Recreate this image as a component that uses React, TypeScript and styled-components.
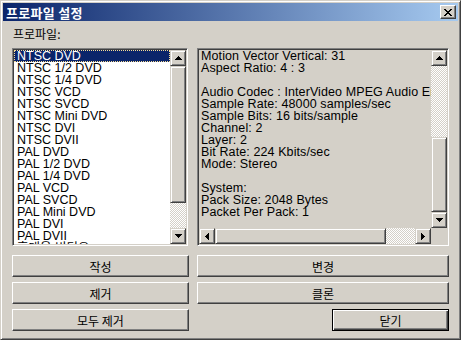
import React from "react";
import styled, { createGlobalStyle, css } from "styled-components";

const GlobalStyle = createGlobalStyle`
  html, body {
    margin: 0;
    padding: 0;
    background: #d4d0c8;
  }
`;

const profiles = [
  "NTSC DVD",
  "NTSC 1/2 DVD",
  "NTSC 1/4 DVD",
  "NTSC VCD",
  "NTSC SVCD",
  "NTSC Mini DVD",
  "NTSC DVI",
  "NTSC DVII",
  "PAL DVD",
  "PAL 1/2 DVD",
  "PAL 1/4 DVD",
  "PAL VCD",
  "PAL SVCD",
  "PAL Mini DVD",
  "PAL DVI",
  "PAL DVII",
  "휴대용 비디오",
];

const details = [
  "Motion Vector Vertical: 31",
  "Aspect Ratio: 4 : 3",
  "",
  "Audio Codec : InterVideo MPEG Audio Encoder",
  "Sample Rate: 48000 samples/sec",
  "Sample Bits: 16 bits/sample",
  "Channel: 2",
  "Layer: 2",
  "Bit Rate: 224 Kbits/sec",
  "Mode: Stereo",
  "",
  "System:",
  "Pack Size: 2048 Bytes",
  "Packet Per Pack: 1",
];

const raised = css`
  box-sizing: border-box;
  background: #d4d0c8;
  border: 1px solid;
  border-color: #d4d0c8 #404040 #404040 #d4d0c8;
  box-shadow: inset 1px 1px #fff, inset -1px -1px #808080;
`;

const Arrow: React.FC<{ dir: "up" | "down" | "left" | "right" }> = ({ dir }) => {
  const points = {
    up: "3.5,0 7,4 0,4",
    down: "0,0 7,0 3.5,4",
    left: "4,0 4,7 0,3.5",
    right: "0,0 4,3.5 0,7",
  }[dir];
  const vertical = dir === "up" || dir === "down";
  return (
    <svg
      width={vertical ? 7 : 4}
      height={vertical ? 4 : 7}
      viewBox={vertical ? "0 0 7 4" : "0 0 4 7"}
      shapeRendering="crispEdges"
    >
      <polygon points={points} fill="#000" />
    </svg>
  );
};

const CloseGlyph = () => (
  <svg width="8" height="7" viewBox="0 0 8 7" shapeRendering="crispEdges">
    <path
      d="M0 0h2v1H0zM6 0h2v1H6zM1 1h2v1H1zM5 1h2v1H5zM2 2h4v1H2zM3 3h2v1H3zM2 4h4v1H2zM1 5h2v1H1zM5 5h2v1H5zM0 6h2v1H0zM6 6h2v1H6z"
      fill="#000"
    />
  </svg>
);

const App: React.FC = () => {
  return (
    <>
      <GlobalStyle />
      <Window>
        <TitleBar>
          <TitleText>프로파일 설정</TitleText>
          <CloseButton>
            <CloseGlyph />
          </CloseButton>
        </TitleBar>
        <Body>
          <Label>프로파일:</Label>
          <Panels>
            <Sunken>
              <ListArea>
                {profiles.map((name, i) => (
                  <ListRow key={name} $selected={i === 0}>
                    {name}
                  </ListRow>
                ))}
              </ListArea>
              <VScroll>
                <ScrollButton>
                  <Arrow dir="up" />
                </ScrollButton>
                <Thumb $size={137} />
                <Track />
                <ScrollButton>
                  <Arrow dir="down" />
                </ScrollButton>
              </VScroll>
            </Sunken>
            <Sunken $readonly>
              <DetailGrid>
                <DetailText>
                  {details.map((line, i) => (
                    <DetailLine key={i}>{line || "\u00a0"}</DetailLine>
                  ))}
                </DetailText>
                <VScroll>
                  <ScrollButton>
                    <Arrow dir="up" />
                  </ScrollButton>
                  <Track />
                  <Thumb $size={75} />
                  <ScrollButton>
                    <Arrow dir="down" />
                  </ScrollButton>
                </VScroll>
                <HScroll>
                  <ScrollButton>
                    <Arrow dir="left" />
                  </ScrollButton>
                  <Thumb $size={171} $horizontal />
                  <Track />
                  <ScrollButton>
                    <Arrow dir="right" />
                  </ScrollButton>
                </HScroll>
                <Corner />
              </DetailGrid>
            </Sunken>
          </Panels>
          <Buttons>
            <Button>작성</Button>
            <Button>변경</Button>
            <Button>제거</Button>
            <Button>클론</Button>
            <Button>모두 제거</Button>
            <Button $default>닫기</Button>
          </Buttons>
        </Body>
      </Window>
    </>
  );
};

// Styled components
const Window = styled.div`
  width: 461px;
  height: 340px;
  box-sizing: border-box;
  padding: 2px;
  background: #d4d0c8;
  border: 1px solid;
  border-color: #d4d0c8 #404040 #404040 #d4d0c8;
  box-shadow: inset 1px 1px #fff, inset -1px -1px #808080;
  display: flex;
  flex-direction: column;
  font-family: "Liberation Sans", "Noto Sans CJK KR", sans-serif;
`;

const TitleBar = styled.div`
  height: 18px;
  flex: none;
  display: flex;
  align-items: center;
  justify-content: space-between;
  padding: 0 2px 0 3px;
  background: linear-gradient(to right, #0a246a, #a6caf0);
`;

const TitleText = styled.div`
  color: #fff;
  font-family: "Noto Sans CJK KR", sans-serif;
  font-weight: bold;
  font-size: 13px;
  line-height: 15px;
  letter-spacing: 0.3px;
`;

const CloseButton = styled.div`
  ${raised};
  width: 16px;
  height: 14px;
  border-color: #fff #404040 #404040 #fff;
  box-shadow: inset -1px -1px #808080;
  display: flex;
  align-items: center;
  justify-content: center;
`;

const Body = styled.div`
  flex: 1;
  display: flex;
  flex-direction: column;
  padding: 7px 9px 0 9px;
`;

const Label = styled.div`
  font-family: "Noto Sans CJK KR", sans-serif;
  font-size: 12px;
  line-height: 12px;
  height: 12px;
  padding-left: 1px;
  margin-bottom: 8px;
  color: #000;
`;

const Panels = styled.div`
  display: grid;
  grid-template-columns: 176px 1fr;
  column-gap: 9px;
  height: 198px;
`;

const Sunken = styled.div<{ $readonly?: boolean }>`
  box-sizing: border-box;
  padding: 1px;
  border: 1px solid;
  border-color: #808080 #fff #fff #808080;
  box-shadow: inset 1px 1px #404040, inset -1px -1px #d4d0c8;
  background: ${(p) => (p.$readonly ? "#d4d0c8" : "#fff")};
  display: flex;
  overflow: hidden;
`;

const ListArea = styled.div`
  flex: 1;
  overflow: hidden;
  background: #fff;
`;

const ListRow = styled.div<{ $selected?: boolean }>`
  height: 12px;
  line-height: 12px;
  font-size: 12.5px;
  padding-left: 3px;
  white-space: nowrap;
  color: ${(p) => (p.$selected ? "#fff" : "#000")};
  background: ${(p) => (p.$selected ? "#0a246a" : "transparent")};
  outline: ${(p) => (p.$selected ? "1px dotted #f5db95" : "none")};
  outline-offset: -1px;
`;

const VScroll = styled.div`
  width: 16px;
  flex: none;
  display: flex;
  flex-direction: column;
`;

const HScroll = styled.div`
  height: 16px;
  display: flex;
`;

const ScrollButton = styled.div`
  ${raised};
  width: 16px;
  height: 16px;
  flex: none;
  display: flex;
  align-items: center;
  justify-content: center;
`;

const Thumb = styled.div<{ $size: number; $horizontal?: boolean }>`
  ${raised};
  flex: none;
  ${(p) => (p.$horizontal ? `width: ${p.$size}px;` : `height: ${p.$size}px;`)}
`;

const Track = styled.div`
  flex: 1;
  background: repeating-conic-gradient(#fff 0 25%, #d4d0c8 0 50%) 0 0 / 2px 2px;
`;

const DetailGrid = styled.div`
  flex: 1;
  display: grid;
  grid-template-columns: 1fr 16px;
  grid-template-rows: 1fr 16px;
  min-width: 0;
`;

const DetailText = styled.div`
  overflow: hidden;
  padding-left: 2px;
  min-width: 0;
`;

const DetailLine = styled.div`
  height: 12px;
  line-height: 12px;
  font-size: 12.5px;
  letter-spacing: 0.1px;
  white-space: nowrap;
  color: #000;
`;

const Corner = styled.div`
  background: #d4d0c8;
`;

const Buttons = styled.div`
  display: grid;
  grid-template-columns: 177px 1fr;
  grid-auto-rows: 22px;
  column-gap: 8px;
  row-gap: 5px;
  margin-top: 9px;
`;

const Button = styled.div<{ $default?: boolean }>`
  box-sizing: border-box;
  display: flex;
  align-items: center;
  justify-content: center;
  font-family: "Noto Sans CJK KR", sans-serif;
  font-size: 12px;
  color: #000;
  background: #d4d0c8;
  border: 1px solid;
  border-color: #fff #404040 #404040 #fff;
  box-shadow: inset -1px -1px #808080;
  ${(p) =>
    p.$default &&
    css`
      width: 117px;
      justify-self: end;
      border-color: #000;
      box-shadow: inset 1px 1px #fff, inset -1px -1px #404040,
        inset -2px -2px #808080;
    `}
`;

export default App;
